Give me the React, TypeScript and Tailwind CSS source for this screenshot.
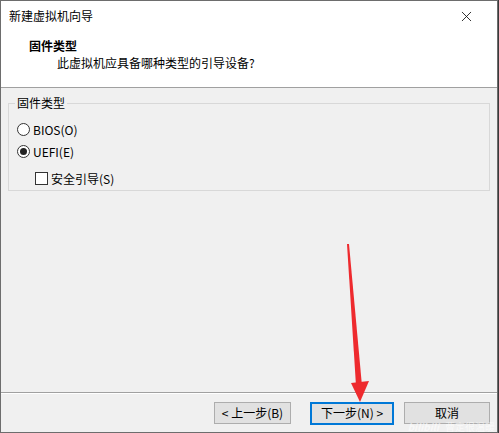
import { X } from 'lucide-react'

const font = { fontFamily: '"Noto Sans CJK SC", "Noto Sans", sans-serif' }

export default function App() {
  return (
    <div className="relative w-[499px] h-[433px] bg-[#3a3a3a] overflow-hidden" style={font}>
      <div className="flex flex-col w-[498px] h-[433px] border border-[#6d6d6d] bg-[#f0f0f0] text-[12px] text-black leading-none">
        {/* Title bar */}
        <div className="flex items-center justify-between h-[30px] bg-white pl-[8px] pr-[22px]">
          <span>新建虚拟机向导</span>
          <X className="w-[17px] h-[17px] text-[#111]" strokeWidth={1.2} />
        </div>

        {/* Header */}
        <div className="flex flex-col h-[57px] bg-white border-b border-[#a0a0a0] pl-[28px] pt-[9px]">
          <span className="font-bold">固件类型</span>
          <span className="mt-[5px] pl-[28px]">此虚拟机应具备哪种类型的引导设备?</span>
        </div>

        {/* Body */}
        <div className="flex flex-col flex-1 pt-[15px] px-[7px]">
          <div className="relative h-[88px] border border-[#d8d8d8] pl-[8px] pt-[19px]">
            <span className="absolute -top-[7px] left-[6px] bg-[#f0f0f0] px-[2px]">固件类型</span>
            <div className="flex flex-col gap-[9px]">
              <label className="flex items-center gap-[3px] h-[13px]">
                <span className="w-[13px] h-[13px] rounded-full border border-[#333] bg-white" />
                <span>BIOS(O)</span>
              </label>
              <label className="flex items-center gap-[3px] h-[13px]">
                <span className="flex items-center justify-center w-[13px] h-[13px] rounded-full border border-[#333] bg-white">
                  <span className="w-[7px] h-[7px] rounded-full bg-[#222]" />
                </span>
                <span>UEFI(E)</span>
              </label>
              <label className="flex items-center gap-[3px] h-[13px] mt-[5px] pl-[18px]">
                <span className="w-[13px] h-[13px] border border-[#333] bg-white" />
                <span>安全引导(S)</span>
              </label>
            </div>
          </div>
        </div>

        {/* Footer */}
        <div className="border-t border-[#a0a0a0]">
          <div className="flex items-center justify-end h-[39px] border-t border-white pr-[7px]">
            <button className="w-[77px] h-[22px] bg-[#e1e1e1] border border-[#adadad]">&lt; 上一步(B)</button>
            <button className="w-[84px] h-[23px] ml-[19px] bg-[#e1e1e1] border-2 border-[#0078d7]">下一步(N) &gt;</button>
            <button className="w-[86px] h-[22px] ml-[10px] bg-[#e1e1e1] border border-[#adadad]">取消</button>
          </div>
        </div>
      </div>

      {/* Red annotation arrow */}
      <svg className="absolute left-0 top-0 pointer-events-none" width="499" height="433">
        <polygon points="347,244 349,244 362,386 356,386" fill="#ee2a2e" />
        <polygon points="351,383 369,381 360,402" fill="#ee2a2e" />
      </svg>

      {/* Watermark */}
      <div className="absolute right-[4px] bottom-[1px] flex items-center gap-[6px] text-white/60 text-[10px] leading-none pointer-events-none">
        <span className="font-bold italic">bilibili</span>
        <span>曹定很温暖</span>
      </div>
    </div>
  )
}
